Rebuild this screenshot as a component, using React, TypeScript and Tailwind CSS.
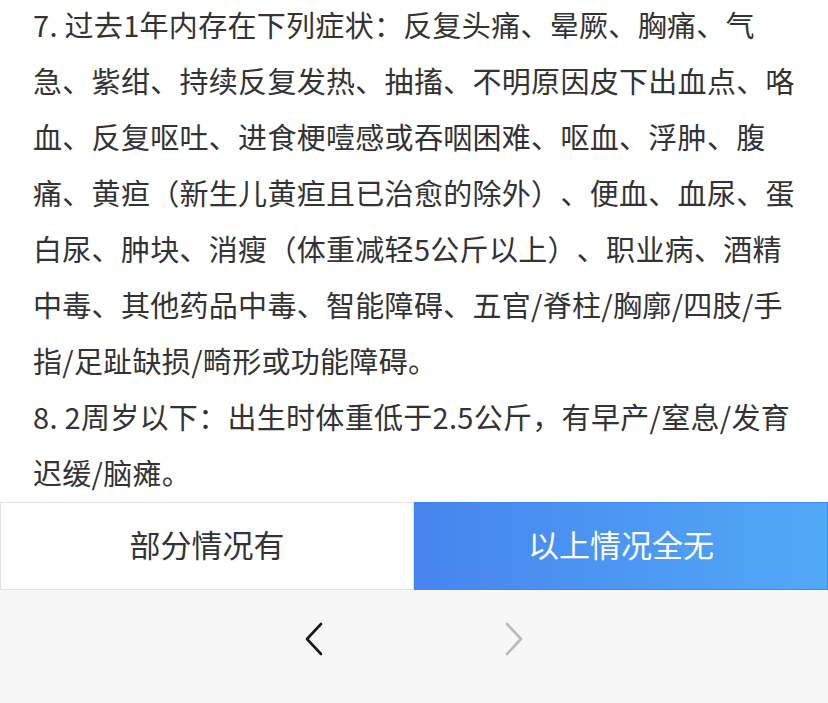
const item7 = [
  "7. 过去1年内存在下列症状：反复头痛、晕厥、胸痛、气",
  "急、紫绀、持续反复发热、抽搐、不明原因皮下出血点、咯",
  "血、反复呕吐、进食梗噎感或吞咽困难、呕血、浮肿、腹",
  "痛、黄疸（新生儿黄疸且已治愈的除外）、便血、血尿、蛋",
  "白尿、肿块、消瘦（体重减轻5公斤以上）、职业病、酒精",
  "中毒、其他药品中毒、智能障碍、五官/脊柱/胸廓/四肢/手",
  "指/足趾缺损/畸形或功能障碍。",
];

const item8 = ["8. 2周岁以下：出生时体重低于2.5公斤，有早产/窒息/发育", "迟缓/脑瘫。"];

function Lines({ lines }: { lines: string[] }) {
  return (
    <p>
      {lines.map((l) => (
        <span key={l} className="block whitespace-nowrap">
          {l}
        </span>
      ))}
    </p>
  );
}

export default function App() {
  return (
    <div
      className="w-[828px] h-[703px] flex flex-col bg-white overflow-hidden"
      style={{ fontFamily: '"Noto Sans CJK SC", "Noto Sans", sans-serif' }}
    >
      <div className="h-[502px] overflow-hidden">
        <div className="-mt-[4px] px-[33px] text-[29px] leading-[56px] tracking-[0.3px] text-[#333333] [text-spacing-trim:space-all]">
          <Lines lines={item7} />
          <Lines lines={item8} />
        </div>
      </div>

      <div className="flex h-[88px]">
        <button className="w-[414px] flex items-center justify-center pb-[4px] border border-[#e3e3e3] bg-white text-[31px] text-[#333333]">
          部分情况有
        </button>
        <button className="flex-1 flex items-center justify-center pb-[4px] border border-[#3f87ea] bg-gradient-to-r from-[#4784ee] to-[#52a9f7] text-[31px] text-white">
          以上情况全无
        </button>
      </div>

      <div className="flex-1 bg-[#f7f7f7] flex justify-center pt-[32px] gap-[170px]">
        <button className="w-[30px] h-[34px] flex items-center justify-center">
          <svg width="20" height="34" viewBox="0 0 20 34" fill="none">
            <path d="M17 2 L3 17 L17 32" stroke="#1a1a1a" strokeWidth="2.6" strokeLinecap="round" strokeLinejoin="round" />
          </svg>
        </button>
        <button className="w-[30px] h-[34px] flex items-center justify-center">
          <svg width="20" height="34" viewBox="0 0 20 34" fill="none">
            <path d="M3 2 L17 17 L3 32" stroke="#b9b9b9" strokeWidth="2.6" strokeLinecap="round" strokeLinejoin="round" />
          </svg>
        </button>
      </div>
    </div>
  );
}
